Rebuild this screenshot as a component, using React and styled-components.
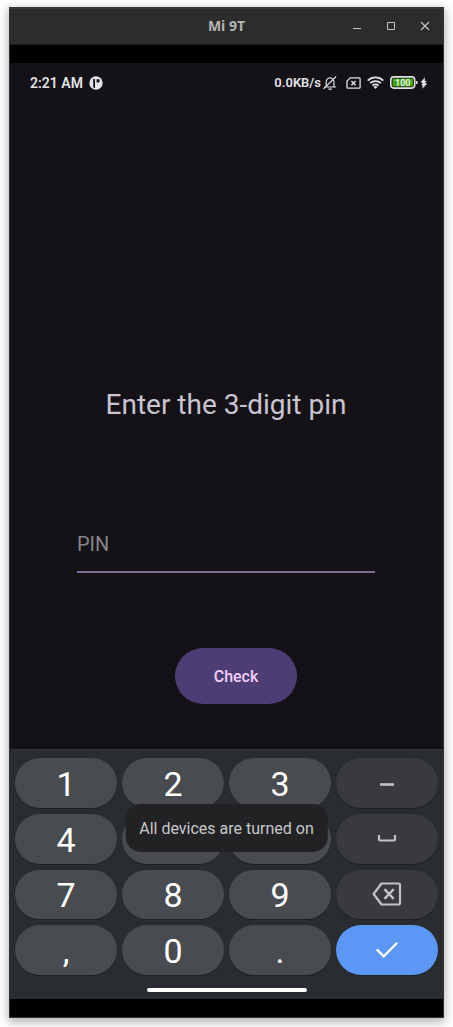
import React from "react";
import styled, { createGlobalStyle } from "styled-components";

const GlobalStyle = createGlobalStyle`
  *, *::before, *::after { box-sizing: border-box; }
  body {
    margin: 0;
    background: #fefefe;
    font-family: Roboto, "Liberation Sans", sans-serif;
  }
  button, input { font-family: inherit; }
`;

const Desktop = styled.div`
  display: flex;
  min-height: 100vh;
  padding: 7px 9px 9px;
`;

const Window = styled.div`
  flex: 1;
  min-width: 0;
  display: flex;
  flex-direction: column;
  border: 1px solid #343434;
  background: #000;
  box-shadow: 0 3px 9px 1px rgba(0, 0, 0, 0.3);
`;

const TitleBar = styled.header`
  display: grid;
  grid-template-columns: 1fr auto 1fr;
  align-items: center;
  height: 37px;
  padding-bottom: 1px;
  background: #2c2c2c;
  border-top: 1px solid #3c3c3c;
  border-bottom: 1px solid #1d1d1d;
`;

const Title = styled.h1`
  grid-column: 2;
  margin: 0;
  font: 700 14px/20px "Open Sans", "Noto Sans", sans-serif;
  color: #b4b4b4;
`;

const WindowControls = styled.div`
  display: flex;
  justify-content: flex-end;
  gap: 14px;
  padding-right: 8px;
`;

const WindowButton = styled.button`
  display: flex;
  width: 20px;
  height: 20px;
  padding: 0;
  border: 0;
  background: none;
  color: #c4c4c4;
`;

const Screen = styled.div`
  position: relative;
  flex: 1;
  display: flex;
  flex-direction: column;
  margin: 18px 0;
  background: #141217;
`;

const StatusBar = styled.div`
  display: flex;
  justify-content: space-between;
  align-items: center;
  height: 39px;
  padding: 0 15px 0 20px;
  color: #e4e2e6;
`;

const StatusGroup = styled.div`
  display: flex;
  align-items: center;
  gap: ${(p) => p.$gap}px;
`;

const StatusText = styled.span`
  font-size: ${(p) => p.$size}px;
  line-height: 20px;
  font-weight: 600;
  white-space: nowrap;
`;

const Form = styled.form`
  flex: 1;
  display: flex;
  flex-direction: column;
  align-items: center;
  justify-content: flex-end;
  padding: 0 68px 45px 67px;
`;

const Heading = styled.h2`
  margin: 0 0 100px;
  font-size: 28px;
  line-height: 36px;
  font-weight: 400;
  color: #cac4d0;
  white-space: nowrap;
`;

const PinInput = styled.input`
  width: 100%;
  height: 50px;
  margin-bottom: 75px;
  padding: 0 0 6px;
  border: 0;
  border-bottom: 2px solid #7b6f95;
  border-radius: 0;
  outline: 0;
  background: none;
  color: #e6e0e9;
  font-size: 20px;
  line-height: 24px;
  &::placeholder { color: #87848a; opacity: 1; }
`;

const ButtonRow = styled.div`
  padding-left: 20px;
`;

const CheckButton = styled.button`
  display: block;
  width: 122px;
  height: 56px;
  padding: 2px 0 0;
  border: 0;
  border-radius: 28px;
  background: #4d3d75;
  color: #f2d0fb;
  font-size: 16px;
  line-height: 20px;
  font-weight: 500;
`;

const Keyboard = styled.div`
  padding: 8px 5px 7px;
  border-top: 1px solid #34373a;
  background: #292c31;
`;

const KeyGrid = styled.div`
  display: grid;
  grid-template-columns: repeat(4, 1fr);
  grid-template-rows: repeat(4, 1fr);
  gap: 6px 5px;
  height: 217px;
`;

const keyColors = {
  digit: "#484b4f",
  action: "#383a3e",
  enter: "#5c97f5",
};

const Key = styled.button`
  display: flex;
  align-items: center;
  justify-content: center;
  min-height: 0;
  padding: ${(p) => (p.$kind === "digit" ? "2px 0 0" : "0")};
  border: 0;
  border-radius: 25px;
  background: ${(p) => keyColors[p.$kind]};
  box-shadow: 0 1px 0 #1f2225;
  color: ${(p) => (p.$kind === "action" ? "#c3c3c6" : "#fff")};
  font-size: 34px;
  line-height: 40px;
`;

const HomeBar = styled.div`
  width: 160px;
  height: 4px;
  margin: 13px auto 0;
  border-radius: 2px;
  background: #fff;
`;

const Toast = styled.div`
  position: absolute;
  bottom: 147px;
  left: 50%;
  transform: translateX(-50%);
  padding: 15px 14px 13px;
  border-radius: 15px;
  background: #222224;
  color: #c8c8c9;
  font-size: 16px;
  line-height: 20px;
  white-space: nowrap;
`;

const Icon = ({ w, h, children }) => (
  <svg
    width={w}
    height={h}
    viewBox={`0 0 ${w} ${h}`}
    fill="none"
    stroke="currentColor"
    aria-hidden="true"
  >
    {children}
  </svg>
);

const AppBadge = () => (
  <Icon w={14} h={14}>
    <circle cx="7" cy="7" r="6.7" fill="currentColor" stroke="none" />
    <path d="M4.200 3h1.800v9H5.200q-1-.6-1-2zM7.600 3.200h2.200q.8 0 .8.8v1.200q0 1.400-1.400 1.400H7.600z" fill="#141217" stroke="none" />
  </Icon>
);

const BellOff = () => (
  <Icon w={14} h={14}>
    <path d="M1.500 11h11.200M3.200 10.800V6.200C3.200 3.800 4.800 1.800 7 1.800s3.900 2 3.900 4.400v4.600M5.800 13.200h2.600M.8 12.600 12.800.8" strokeWidth="1.200" strokeLinecap="round" />
  </Icon>
);

const SimOff = () => (
  <Icon w={15} h={12}>
    <path d="M4.300.8h8.900q.9 0 .9.9v8.600q0 .9-.9.9H1.900q-.9 0-.9-.9V4z" strokeWidth="1.300" />
    <path d="m5.400 4 4.200 4.200m0-4.200L5.400 8.200" strokeWidth="1.400" />
  </Icon>
);

const Wifi = () => (
  <Icon w={17} h={13}>
    <path d="M.8 4.600c4.300-4.300 11.100-4.300 15.400 0M3.200 7.200c3-2.900 7.600-2.900 10.600 0M5.500 9.600c1.700-1.600 4.300-1.600 6 0" strokeWidth="1.800" />
    <path d="m6.500 10.800 2 2.100 2-2.100q-2-1.400-4 0" fill="currentColor" stroke="none" />
  </Icon>
);

const Battery = () => (
  <Icon w={28} h={13}>
    <rect x=".8" y=".9" width="23.900" height="11.200" rx="3" strokeWidth="1.600" />
    <rect x="2.500" y="2.600" width="20.500" height="7.800" rx="1.200" fill="#41a511" stroke="none" />
    <path d="M26.700 5v3" strokeWidth="1.600" />
    <text x="12.800" y="9.800" textAnchor="middle" fontSize="9" fontWeight="600" fontFamily="Roboto, sans-serif" fill="#f2f2f2" stroke="none">
      100
    </text>
  </Icon>
);

const Bolt = () => (
  <Icon w={8} h={12}>
    <path d="M5 .3.600 5.200l2.400 1-2 1.600 1.600.5-.3 3.500 4.800-5-2.300-1 2.200-1.500-2.300-.6z" fill="currentColor" stroke="none" />
  </Icon>
);

const Dash = () => (
  <Icon w={28} h={28}>
    <path d="M7 15.500h14" strokeWidth="2.600" />
  </Icon>
);

const Space = () => (
  <Icon w={28} h={28}>
    <path d="M6 10v4.500q0 1 1 1h14q1 0 1-1V10" strokeWidth="2.200" />
  </Icon>
);

const Backspace = () => (
  <Icon w={30} h={24}>
    <path d="M9.500 1.500h17.300q1.200 0 1.200 1.200v18.600q0 1.200-1.200 1.200H9.500L1.600 12z" strokeWidth="2.200" strokeLinejoin="round" />
    <path d="m12.500 7.200 9.200 9.600m0-9.600-9.200 9.600" strokeWidth="2.400" />
  </Icon>
);

const Check = () => (
  <Icon w={24} h={18}>
    <path d="m1.800 8.400 6.900 6.900L22.200 1.800" strokeWidth="2.300" />
  </Icon>
);

const keys = [
  ["1"], ["2"], ["3"], ["Dash", "action", Dash],
  ["4"], ["5"], ["6"], ["Space", "action", Space],
  ["7"], ["8"], ["9"], ["Backspace", "action", Backspace],
  [","], ["0"], ["."], ["Done", "enter", Check],
];

export default function App() {
  return (
    <>
      <GlobalStyle />
      <Desktop>
        <Window>
          <TitleBar>
            <Title>Mi 9T</Title>
            <WindowControls>
              <WindowButton aria-label="Minimize">
                <Icon w={20} h={20}><path d="M6 12.500h8" /></Icon>
              </WindowButton>
              <WindowButton aria-label="Maximize">
                <Icon w={20} h={20}><path d="M6.500 6.500h7v7h-7z" /></Icon>
              </WindowButton>
              <WindowButton aria-label="Close">
                <Icon w={20} h={20}><path d="m6 6 8 8m0-8-8 8" strokeWidth="1.200" /></Icon>
              </WindowButton>
            </WindowControls>
          </TitleBar>
          <Screen>
            <StatusBar>
              <StatusGroup $gap={6}>
                <StatusText $size={14}>2:21 AM</StatusText>
                <AppBadge />
              </StatusGroup>
              <StatusGroup $gap={2}>
                <StatusText $size={13}>0.0KB/s</StatusText>
                <StatusGroup $gap={9}>
                  <BellOff />
                  <StatusGroup $gap={6}>
                    <SimOff />
                    <Wifi />
                    <StatusGroup $gap={2}>
                      <Battery />
                      <Bolt />
                    </StatusGroup>
                  </StatusGroup>
                </StatusGroup>
              </StatusGroup>
            </StatusBar>
            <Form onSubmit={(e) => e.preventDefault()}>
              <Heading>Enter the 3-digit pin</Heading>
              <PinInput aria-label="PIN" placeholder="PIN" inputMode="numeric" maxLength={3} />
              <ButtonRow>
                <CheckButton type="submit">Check</CheckButton>
              </ButtonRow>
            </Form>
            <Keyboard>
              <KeyGrid>
                {keys.map(([label, kind = "digit", Glyph]) => (
                  <Key key={label} type="button" $kind={kind} aria-label={label}>
                    {Glyph ? <Glyph /> : label}
                  </Key>
                ))}
              </KeyGrid>
              <HomeBar />
            </Keyboard>
            <Toast role="status">All devices are turned on</Toast>
          </Screen>
        </Window>
      </Desktop>
    </>
  );
}
